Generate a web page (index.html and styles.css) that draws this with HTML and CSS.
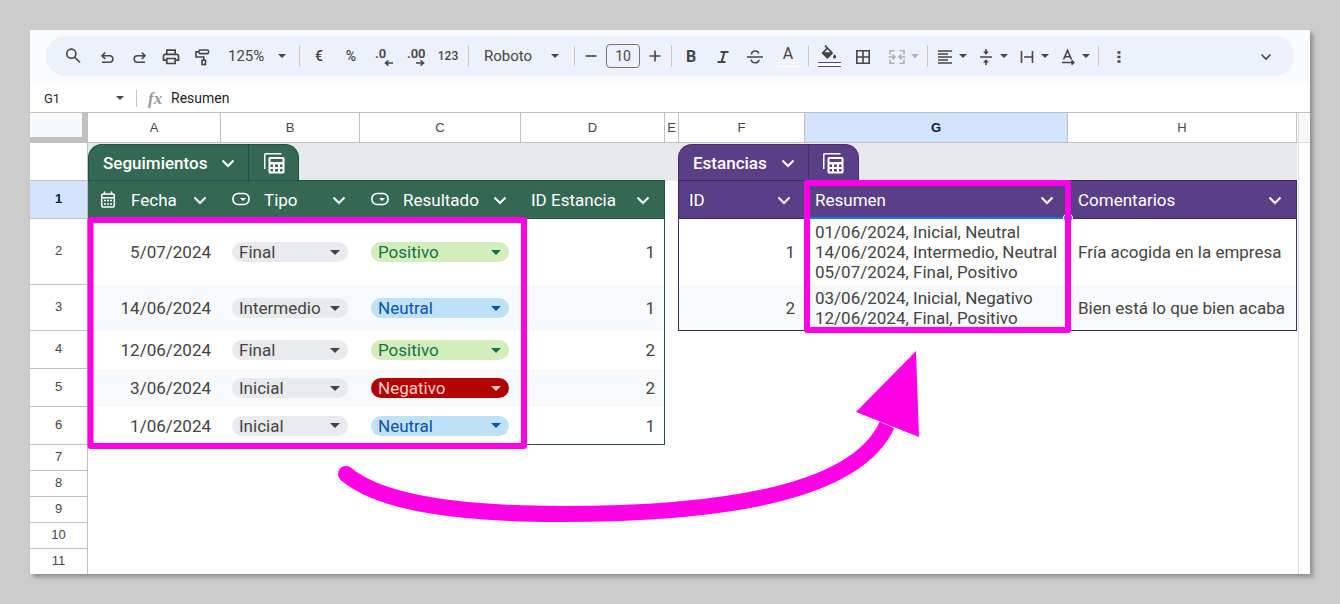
FILE: index.html
```html
<!DOCTYPE html>
<html lang="es">
<head>
<meta charset="utf-8">
<title>Seguimientos y estancias</title>
<link rel="stylesheet" href="styles.css">
</head>
<body>
<svg class="defs" aria-hidden="true">
  <symbol id="chev" viewBox="0 0 14 14"><path d="M1.500 4.500 7 10l5.500-5.500" fill="none" stroke="currentColor" stroke-width="2"/></symbol>
  <symbol id="calc" viewBox="0 0 21 21"><path fill="currentColor" fill-rule="evenodd" d="M0 16V1.500Q0 0 1.500 0H17.500V1.500H1.500V16ZM6 4H19Q20.500 4 20.500 5.500V19Q20.500 20.500 19 20.500H6Q4.500 20.500 4.500 19V5.500Q4.500 4 6 4ZM6.500 6V9H18.500V6ZM6.500 11.500V14H9V11.500ZM11 11.500V14H14V11.500ZM16 11.500V14H18.500V11.500ZM6.500 16V18.500H9V16ZM11 16V18.500H14V16ZM16 16V18.500H18.500V16Z"/></symbol>
  <symbol id="pick" viewBox="0 0 18 18"><rect x="1" y="2.500" width="16" height="11" rx="5" fill="none" stroke="currentColor" stroke-width="1.600"/><path d="M8 7h6L11 10z" fill="currentColor"/></symbol>
  <symbol id="cal" viewBox="0 0 18 18"><rect x="2.700" y="3" width="12.600" height="13" rx="1.500" fill="none" stroke="currentColor" stroke-width="1.500"/><path d="M3 6.800h12M5.500.5v3M12.500.5v3" stroke="currentColor" stroke-width="1.500"/><path d="M5 9.500h2M8 9.500h2M11 9.500h2M5 13h2M8 13h2M11 13h2" stroke="currentColor" stroke-width="1.600"/></symbol>
</svg>
<main class="window">
  <header class="top">
    <div class="toolbar" role="toolbar" aria-label="Formato">
      <button class="tool first" aria-label="Buscar"><svg class="icon" viewBox="0 0 20 20"><circle cx="8.300" cy="7.700" r="4.600"/><path d="M11.700 11.200 17 16.500"/></svg></button>
      <button class="tool" aria-label="Deshacer"><svg class="icon" viewBox="0 0 20 20"><path d="M8.200 6.500 5 9.700l3.200 3.200M5.500 9.700h7a3.300 3.300 0 0 1 0 6.600H5"/></svg></button>
      <button class="tool" aria-label="Rehacer"><svg class="icon" viewBox="0 0 20 20"><path d="M12.800 6.500 16 9.700l-3.200 3.200M15.500 9.700h-7a3.300 3.300 0 0 0 0 6.600H16"/></svg></button>
      <button class="tool" aria-label="Imprimir"><svg class="icon solid" viewBox="0 -1 24 24"><path d="M19 8h-1V3H6v5H5c-1.660 0-3 1.340-3 3v6h4v4h12v-4h4v-6c0-1.660-1.340-3-3-3zM8 5h8v3H8V5zm8 12v2H8v-4h8v2zm2-2v-2H6v2H4v-4c0-.550.450-1 1-1h14c.550 0 1 .450 1 1v4h-2z"/></svg></button>
      <button class="tool" aria-label="Copiar formato"><svg class="icon" viewBox="0 0 20 20"><rect x="6" y="4" width="9.500" height="3.600" rx="1"/><path d="M6 5.800H3v5.200h7.800v3"/><rect x="9" y="14.300" width="3.500" height="4.200"/></svg></button>
      <span class="drop zoom"><select aria-label="Zoom"><option>125%</option><option>100%</option></select></span>
      <span class="sep"></span>
      <button class="tool text" aria-label="Moneda">€</button>
      <button class="tool text" aria-label="Porcentaje">%</button>
      <button class="tool dec" aria-label="Menos decimales">.0<svg class="sub" viewBox="0 0 9 6"><path d="M9 3H2M4.500.5 1.500 3l3 2.500"/></svg></button>
      <button class="tool dec" aria-label="Más decimales">.00<svg class="sub" viewBox="0 0 9 6"><path d="M0 3h7M4.500.5l3 2.500-3 2.500"/></svg></button>
      <button class="tool wide num" aria-label="Más formatos">123</button>
      <span class="sep"></span>
      <span class="drop font"><select aria-label="Fuente"><option>Roboto</option><option>Arial</option></select></span>
      <span class="sep"></span>
      <button class="tool step" aria-label="Reducir"><svg class="icon" viewBox="0 0 20 20"><path d="M4.500 10h11"/></svg></button>
      <input class="size" aria-label="Tamaño de fuente" value="10">
      <button class="tool step" aria-label="Aumentar"><svg class="icon" viewBox="0 0 20 20"><path d="M4.500 10h11M10 4.500v11"/></svg></button>
      <span class="sep"></span>
      <button class="tool bold" aria-label="Negrita">B</button>
      <button class="tool" aria-label="Cursiva"><svg class="icon ital" viewBox="0 0 20 20"><path d="M7.500 6h8M4.500 16h8M11.500 6l-3 10"/></svg></button>
      <button class="tool" aria-label="Tachado"><svg class="icon" viewBox="0 0 20 20"><path d="M2 11h16M6.500 8.500C6.500 4 13 4 13.700 7.500M6.200 13.500c.6 4.300 7.700 4.300 7.700.2"/></svg></button>
      <button class="tool wide color" aria-label="Color del texto"><span>A</span><i class="bar white"></i></button>
      <span class="sep"></span>
      <button class="tool wide color" aria-label="Color de relleno"><svg class="bucket" viewBox="0 0 24 20"><path d="M16.560 8.940 7.620 0 6.210 1.410l2.380 2.380-5.150 5.150c-.590.590-.590 1.540 0 2.120l5.500 5.500c.590.590 1.540.590 2.120 0l5.500-5.500c.590-.580.590-1.530 0-2.120zM6.500 9 10 5.400 13.500 9zM19 11.500s-2 2.170-2 3.500a2 2 0 0 0 4 0c0-1.330-2-3.500-2-3.500z"/></svg><i class="bar violet"></i></button>
      <button class="tool wide grid" aria-label="Bordes"><svg class="icon" viewBox="0 0 20 20"><path d="M3.800 4.800h12.400v12.400H3.800zM10 4.800v12.400M3.800 11h12.400"/></svg></button>
      <button class="tool combo off" aria-label="Combinar celdas" disabled><svg class="icon" viewBox="0 0 20 20"><path d="M7.500 4.800H3v3.700M3 13.500v3.700h4.500M12.500 4.800H17v3.700M17 13.500v3.700h-4.500M1.500 11h6M5.500 8.500 8 11l-2.500 2.500M18.500 11h-6M14.500 8.500 12 11l2.500 2.500"/></svg><i class="caret"></i></button>
      <span class="sep"></span>
      <button class="tool combo" aria-label="Alineación horizontal"><svg class="icon" viewBox="0 0 20 20"><path d="M3 5h14M3 8h10M3 11h14M3 14h10M3 17h14"/></svg><i class="caret"></i></button>
      <button class="tool combo" aria-label="Alineación vertical"><svg class="icon" viewBox="0 0 20 20"><path d="M4 11h12M10 3v4M10 19v-4"/><path class="fill" d="M7 5.500h6L10 8.800zM7 16.500h6L10 13.200z"/></svg><i class="caret"></i></button>
      <button class="tool combo" aria-label="Ajuste de texto"><svg class="icon" viewBox="0 0 20 20"><path d="M4.500 5v12M15.500 5v12M7 11h8"/></svg><i class="caret"></i></button>
      <button class="tool combo" aria-label="Rotación de texto"><svg class="icon" viewBox="0 0 20 20"><path d="M5.500 13.500 9.500 4.500l4 9M7 10.700h5M4 16.500h12M13.500 14.300l2.300 2.200-2.300 2.200"/></svg><i class="caret"></i></button>
      <span class="sep"></span>
      <button class="tool wide" aria-label="Más"><svg class="icon" viewBox="0 0 20 20"><path class="fill" d="M8.500 5.200h3v2.600h-3zM8.500 9.700h3v2.600h-3zM8.500 14.200h3v2.600h-3z"/></svg></button>
      <button class="tool end" aria-label="Ocultar menús"><svg class="icon" viewBox="0 0 20 20"><path d="M5.500 8.500 10 13l4.500-4.500"/></svg></button>
    </div>
  </header>
  <div class="formula">
    <input class="cellname" aria-label="Cuadro de nombres" value="G1">
    <button class="namelist" aria-label="Intervalos con nombre"><i class="caret"></i></button>
    <label class="fx" for="fx">fx</label>
    <input class="content" id="fx" value="Resumen">
  </div>
  <div class="sheet">
    <table>
      <colgroup><col class="c0"><col class="ca"><col class="cb"><col class="cc"><col class="cd"><col class="ce"><col class="cf"><col class="cg"><col class="ch"><col class="cz"></colgroup>
      <thead>
        <tr class="letters"><td class="corner"></td><th>A</th><th>B</th><th>C</th><th>D</th><th class="thin">E</th><th class="lead">F</th><th class="on">G</th><th>H</th><td class="rail"></td></tr>
      </thead>
      <tbody>
        <tr class="tabs">
          <th></th>
          <td class="gl" colspan="4"><div class="tab green"><button class="name">Seguimientos<svg class="chev"><use href="#chev"/></svg></button><button class="view" aria-label="Vistas de tabla"><svg><use href="#calc"/></svg></button></div></td>
          <td class="blank"></td>
          <td class="vl" colspan="3"><div class="tab violet"><button class="name">Estancias<svg class="chev"><use href="#chev"/></svg></button><button class="view" aria-label="Vistas de tabla"><svg><use href="#calc"/></svg></button></div></td>
          <td class="rail"></td>
        </tr>
        <tr class="heads">
          <th class="on">1</th>
          <td class="g"><button class="head"><svg class="type"><use href="#cal"/></svg>Fecha<svg class="chev"><use href="#chev"/></svg></button></td>
          <td class="g"><button class="head"><svg class="type"><use href="#pick"/></svg>Tipo<svg class="chev"><use href="#chev"/></svg></button></td>
          <td class="g"><button class="head"><svg class="type"><use href="#pick"/></svg>Resultado<svg class="chev"><use href="#chev"/></svg></button></td>
          <td class="g gr"><button class="head">ID Estancia<svg class="chev"><use href="#chev"/></svg></button></td>
          <td></td>
          <td class="v vleft"><button class="head">ID<svg class="chev"><use href="#chev"/></svg></button></td>
          <td class="v active"><button class="head">Resumen<svg class="chev"><use href="#chev"/></svg></button></td>
          <td class="v vr"><button class="head">Comentarios<svg class="chev"><use href="#chev"/></svg></button></td>
          <td class="rail"></td>
        </tr>
        <tr class="r66">
          <th>2</th><td class="n">5/07/2024</td>
          <td><span class="drop chip"><select aria-label="Tipo"><option>Final</option><option>Inicial</option></select></span></td>
          <td><span class="drop chip pos"><select aria-label="Resultado"><option>Positivo</option><option>Neutral</option></select></span></td>
          <td class="n gr">1</td><td></td><td class="n vleft">1</td>
          <td class="t">01/06/2024, Inicial, Neutral<br>14/06/2024, Intermedio, Neutral<br>05/07/2024, Final, Positivo</td>
          <td class="t vr">Fría acogida en la empresa</td><td class="rail"></td>
        </tr>
        <tr class="r46">
          <th>3</th><td class="n z">14/06/2024</td>
          <td class="z"><span class="drop chip"><select aria-label="Tipo"><option>Intermedio</option><option>Final</option></select></span></td>
          <td class="z"><span class="drop chip neu"><select aria-label="Resultado"><option>Neutral</option><option>Positivo</option></select></span></td>
          <td class="n z gr">1</td><td></td><td class="n z vleft vb">2</td>
          <td class="t z vb">03/06/2024, Inicial, Negativo<br>12/06/2024, Final, Positivo</td>
          <td class="t z vr vb">Bien está lo que bien acaba</td><td class="rail"></td>
        </tr>
        <tr class="r38">
          <th>4</th><td class="n">12/06/2024</td>
          <td><span class="drop chip"><select aria-label="Tipo"><option>Final</option><option>Inicial</option></select></span></td>
          <td><span class="drop chip pos"><select aria-label="Resultado"><option>Positivo</option><option>Neutral</option></select></span></td>
          <td class="n gr">2</td><td colspan="4"></td><td class="rail"></td>
        </tr>
        <tr class="r38">
          <th>5</th><td class="n z">3/06/2024</td>
          <td class="z"><span class="drop chip"><select aria-label="Tipo"><option>Inicial</option><option>Final</option></select></span></td>
          <td class="z"><span class="drop chip neg"><select aria-label="Resultado"><option>Negativo</option><option>Positivo</option></select></span></td>
          <td class="n z gr">2</td><td colspan="4"></td><td class="rail"></td>
        </tr>
        <tr class="r38">
          <th>6</th><td class="n gb">1/06/2024</td>
          <td class="gb"><span class="drop chip"><select aria-label="Tipo"><option>Inicial</option><option>Final</option></select></span></td>
          <td class="gb"><span class="drop chip neu"><select aria-label="Resultado"><option>Neutral</option><option>Positivo</option></select></span></td>
          <td class="n gr gb">1</td><td colspan="4"></td><td class="rail"></td>
        </tr>
        <tr class="r26"><th>7</th><td colspan="8"></td><td class="rail"></td></tr>
        <tr class="r26"><th>8</th><td colspan="8"></td><td class="rail"></td></tr>
        <tr class="r26"><th>9</th><td colspan="8"></td><td class="rail"></td></tr>
        <tr class="r26"><th>10</th><td colspan="8"></td><td class="rail"></td></tr>
        <tr class="last"><th>11</th><td colspan="8"></td><td class="rail"></td></tr>
      </tbody>
    </table>
    <svg class="marks" viewBox="30 112 1280 462" preserveAspectRatio="none" aria-hidden="true">
      <circle cx="1068" cy="218" r="4.500" fill="#1a73e8" stroke="#fff"/>
      <g fill="none" stroke="#ff00e6">
        <rect x="90.500" y="220" width="433.500" height="226" stroke-width="6" stroke-linejoin="round"/>
        <rect x="807" y="183" width="261" height="147" stroke-width="6" stroke-linejoin="round"/>
        <path d="M346 474C383 505 465 514 561 514C715 514 855 495 887 425" stroke-width="16"/>
      </g>
      <circle cx="346" cy="474" r="8" fill="#ff00e6"/>
      <path d="M916 351 919 437 856 412z" fill="#ff00e6"/>
    </svg>
  </div>
</main>
</body>
</html>
```
FILE: styles.css
```css
* { box-sizing: border-box; }
body { margin: 0; padding: 30px; background: #ccc; font-family: Roboto, "Liberation Sans", sans-serif; color: #444746; }
.defs { position: absolute; width: 0; height: 0; }
button, select, input { font: inherit; color: inherit; background: none; border: 0; margin: 0; padding: 0; outline: 0; }
select { appearance: none; width: 100%; text-overflow: clip; }
.window { background: #fff; overflow: hidden; box-shadow: 3px 3px 4px rgba(0, 0, 0, .3); }

/* Toolbar */
.top { background: #f9fbfd; padding: 6px 16px 8px; }
.toolbar { display: flex; align-items: center; height: 40px; padding: 0 12px 0 9px; border-radius: 20px; background: #ecf1fa; }
.tool { flex: none; display: flex; align-items: center; justify-content: center; width: 32px; height: 30px; }
.tool.first { width: 36px; }
.tool.wide { width: 34px; }
.tool.step { width: 26px; }
.tool.grid { margin-right: 3px; }
.tool.end { margin-left: auto; }
.tool.text { font-size: 14px; font-weight: 500; }
.tool.num { font-size: 12px; font-weight: 500; }
.tool.bold { font-size: 16px; font-weight: 700; }
.icon { flex: none; width: 20px; height: 20px; fill: none; stroke: currentColor; stroke-width: 1.6; }
.icon.solid { fill: currentColor; stroke: none; }
.icon.ital { stroke-width: 2; }
.icon .fill { fill: currentColor; stroke: none; }
.tool.dec { position: relative; align-items: flex-start; justify-content: flex-start; padding: 5px 0 0 8px; font-size: 13px; line-height: 16px; font-weight: 600; }
.sub { position: absolute; right: 6px; bottom: 5px; width: 9px; height: 6px; fill: none; stroke: currentColor; stroke-width: 1.6; }
.sep { flex: none; width: 1px; height: 20px; margin: 0 3px; background: #c4c7c5; }
.drop { display: grid; align-items: center; }
.drop > select { grid-area: 1 / 1; }
.drop::after { content: ""; grid-area: 1 / 1; justify-self: end; pointer-events: none; }
.drop::after, .caret { border: 5px solid transparent; border-top-color: currentColor; border-bottom: 0; width: 0; height: 0; }
.toolbar .drop::after, .caret { border-width: 4px 4px 0; }
.zoom { width: 77px; padding: 0 10px 0 9px; font-size: 15px; }
.font { width: 99px; padding: 0 12px; font-size: 15px; }
.size { width: 34px; height: 24px; margin: 0 2px; border: 1px solid #747775; border-radius: 4px; text-align: center; font-size: 14px; }
.color { flex-direction: column; justify-content: flex-start; font-size: 16px; line-height: 16px; }
.color > span { flex: none; height: 21px; padding-top: 5px; }
.bucket { flex: none; width: 20px; height: 16px; margin: 4px 0 1px; fill: currentColor; }
.bar { flex: none; width: 23px; height: 5px; border: 1px solid; border-width: 1px 0; }
.bar.white { border-color: #fff; }
.bar.violet { border-color: #5b3f86; background: #fff; }
.combo { width: 41px; justify-content: flex-start; padding-left: 4px; gap: 4px; }
.off { color: #b0b4b9; }

/* Formula bar */
.formula { display: flex; align-items: center; height: 28px; padding-left: 14px; }
.cellname { width: 70px; font-size: 13px; color: #1f1f1f; }
.namelist { display: flex; justify-content: flex-end; width: 10px; margin-right: 12px; }
.fx { height: 17px; padding-left: 11px; width: 35px; border-left: 1px solid #c4c7c5; font: italic 700 17px/18px "Liberation Serif", serif; color: #9a9a9a; }
.content { flex: 1; min-width: 0; font-size: 14px; color: #1f1f1f; }

/* Grid */
.sheet { position: relative; border-top: 1px solid #c0c0c0; }
table { width: 100%; table-layout: fixed; border-collapse: separate; border-spacing: 0; font-size: 17px; line-height: 20px; color: #434343; }
.c0 { width: 58px; } .ca { width: 133px; } .cb { width: 139px; } .cc { width: 161px; } .cd { width: 144px; }
.ce { width: 13px; } .cf { width: 127px; } .cg { width: 263px; } .ch { width: 229px; } .cz { width: 13px; }
td, th { padding: 0; vertical-align: middle; }
th { border: 0 solid #c0c0c0; border-width: 0 1px 1px 0; font: 13px/16px "Liberation Sans", Arial, sans-serif; color: #444746; }
tbody th { padding-bottom: 2px; }
th.on { background: #d3e3fd; color: #041e49; font-weight: 700; }
th.thin { border-right: 0; }
th.lead { border-left-width: 1px; }
.letters { height: 30px; }
.corner { background: #f8f9fa; border: 0 solid #c0c0c0; border-width: 0 6px 6px 0; }
.letters .rail { background-color: #f8f8f8; border-bottom: 1px solid #ddd; }
.rail { background-image: linear-gradient(90deg, #fff 1px, #dadce0 1px, #dadce0 2px, transparent 2px); }
.tabs, .heads, .r38 { height: 38px; }
.r66 { height: 66px; }
.r46 { height: 46px; }
.r26 { height: 26px; }
.last { height: 25px; }
.last th { border-bottom: 0; }
.tabs td { background-color: #e8e9ed; vertical-align: bottom; }
.tabs .rail { background-color: #fff; }
.gl { border-bottom: 1px solid #215040; }
.vl { border-bottom: 1px solid #3f2a66; }
.tab { display: inline-flex; height: 36px; vertical-align: bottom; border: 1px solid; border-bottom: 0; border-radius: 14px 14px 0 0; color: #fff; }
.tab.green, .g { background: #356854; }
.tab.violet, .v { background: #5b3f86; }
.tab.green, .tab.green .view { border-color: #215040; }
.tab.violet, .tab.violet .view { border-color: #462f6c; }
.name { display: flex; align-items: center; gap: 14px; padding: 0 13px 0 14px; font-size: 17px; font-weight: 500; }
.view { width: 50px; padding: 2px 0 0 1px; border-left: 1px solid; display: flex; align-items: center; justify-content: center; }
.view svg { width: 21px; height: 21px; }
.chev { width: 14px; height: 14px; }
.type { width: 18px; height: 18px; margin: 0 14px 0 1px; }
.head { display: flex; align-items: center; width: 100%; padding: 0 14px 0 10px; color: #fff; text-align: left; }
.head .chev { margin-left: auto; }
.g { border-bottom: 1px solid #215040; }
.v { border-bottom: 1px solid #3f2a66; }
.active { padding-top: 2px; border-bottom: 2px solid #1a73e8; }
.gb { border-bottom: 1px solid #215040; }
.vleft { border-left: 1px solid #3f2a66; }
.vr { border-right: 1px solid #3f2a66; }
.vb { border-bottom: 1px solid #3f2a66; }
.n { text-align: right; padding-right: 10px; }
.gr { padding-right: 9px; border-right: 1px solid #215040; }
.g.gr { padding-right: 0; }
.t { padding-left: 10px; white-space: nowrap; }
.z { background: #f8f9fb; }
.chip { height: 20px; margin: 0 12px 0 11px; padding: 0 8px 0 7px; border-radius: 10px; background: #e8eaed; }
.pos { background: #d4edbc; color: #11734b; }
.neu { background: #bfe1f6; color: #0a53a8; }
.neg { background: #b10202; color: #ffcfc9; }
.marks { position: absolute; left: 0; top: -1px; width: 100%; height: calc(100% + 1px); pointer-events: none; }
```
